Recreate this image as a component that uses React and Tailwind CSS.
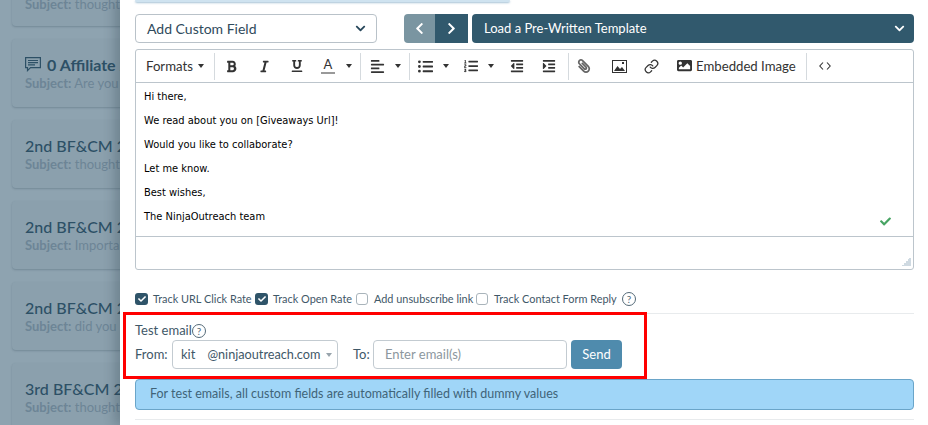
import React from "react";
import {
  FaAlignLeft,
  FaBold,
  FaCheck,
  FaChevronDown,
  FaChevronLeft,
  FaChevronRight,
  FaIndent,
  FaItalic,
  FaListOl,
  FaListUl,
  FaOutdent,
  FaPaperclip,
  FaImage,
  FaUnderline,
} from "react-icons/fa";
import { Link as LinkIcon } from "lucide-react";

const cards = [
  { title: "", subject: "thought you might", hidden: true },
  { title: "0 Affiliate 2020", subject: "Are you doing", icon: true },
  { title: "2nd BF&CM 2020", subject: "thought you might" },
  { title: "2nd BF&CM 2020", subject: "Important update" },
  { title: "2nd BF&CM 2020", subject: "did you catch" },
  { title: "3rd BF&CM 2020", subject: "thought you might" },
];

const body = [
  "Hi there,",
  "We read about you on [Giveaways Url]!",
  "Would you like to collaborate?",
  "Let me know.",
  "Best wishes,",
  "The NinjaOutreach team",
];

const Caret = ({ className = "" }) => (
  <span className={`block border-x-[3.5px] border-t-[4px] border-x-transparent border-t-[#333] ${className}`} />
);

const Sep = ({ className = "" }) => <div className={`h-[27px] w-px shrink-0 bg-[#d5dade] ${className}`} />;

const Tool = ({ icon: Icon, size = 14, className = "" }) => (
  <div className={`flex shrink-0 items-center justify-center ${className}`}>
    <Icon size={size} className="text-[#333]" />
  </div>
);

const CaretTool = ({ icon: Icon, size = 14, className = "" }) => (
  <div className={`flex shrink-0 items-center ${className}`}>
    <Icon size={size} className="text-[#333]" />
    <Caret className="ml-[10px]" />
  </div>
);

const PictureIcon = () => (
  <svg width="15" height="13" viewBox="0 0 15 13" className="text-[#333]">
    <rect x="0.5" y="0.5" width="14" height="12" fill="none" stroke="currentColor" />
    <path d="M2 11l3.5-5 2.5 3 2-2 3 4z" fill="currentColor" />
    <rect x="10" y="2" width="2" height="2" fill="currentColor" />
  </svg>
);

const CodeIcon = () => (
  <svg width="12" height="8" viewBox="0 0 12 8" fill="none" stroke="#333" strokeWidth="1.1">
    <path d="M4 0.5L0.8 4L4 7.5M8 0.5L11.2 4L8 7.5" />
  </svg>
);

const CommentIcon = () => (
  <svg width="16" height="15" viewBox="0 0 16 15" fill="none" stroke="currentColor" strokeWidth="1.2" className="-mt-[2px] shrink-0">
    <path d="M0.6 0.6h14.8v10H5.5L2.5 13.6v-3H0.6z" />
    <path d="M3 3.5h10M3 5.7h10M3 7.9h7" />
  </svg>
);

const Help = ({ className = "" }) => (
  <span className={`flex h-[14px] w-[14px] shrink-0 items-center justify-center rounded-full border border-[#546a78] text-[10px] leading-none text-[#546a78] ${className}`}>
    ?
  </span>
);

const Check = ({ checked, className = "" }) =>
  checked ? (
    <span className={`flex h-[12px] w-[13px] shrink-0 items-center justify-center rounded-[3px] bg-[#2f5469] ${className}`}>
      <FaCheck size={8} className="text-white" />
    </span>
  ) : (
    <span className={`block h-[12px] w-[12px] shrink-0 rounded-[3px] border border-[#a9b4bb] bg-white ${className}`} />
  );

const App = () => {
  return (
    <div className="relative flex h-[425px] w-[928px] overflow-hidden bg-white font-['Lato','Liberation_Sans',sans-serif]">
      {/* dimmed list behind the drawer */}
      <div className="flex h-full w-[120px] shrink-0 flex-col gap-[13px] overflow-hidden bg-[#8ea3b0] pl-[12px]">
        {cards.map((card, i) => (
          <div
            key={i}
            className={`h-[68px] w-[200px] shrink-0 rounded-[4px] bg-[#8ba0ad] pl-[13px] shadow-[0_1px_2px_rgba(40,60,75,0.25)] ${
              card.hidden ? "-mt-[42px] pt-[37px]" : "pt-[17px]"
            }`}
          >
            {!card.hidden && (
              <div className="flex items-center gap-[6px] whitespace-nowrap text-[16px] font-medium leading-[18px] text-[#2d5066]">
                {card.icon && <CommentIcon />}
                <span className={card.icon ? "font-bold" : ""}>{card.title}</span>
              </div>
            )}
            <div className="mt-[2px] whitespace-nowrap text-[13px] leading-[15px] text-[#6d8596]">
              <b>Subject:</b> {card.subject}
            </div>
          </div>
        ))}
      </div>

      {/* drawer */}
      <div className="relative flex w-[808px] shrink-0 flex-col bg-white pl-[15px] pr-[14px] shadow-[-6px_0_10px_rgba(30,50,65,0.25)]">
        <div className="h-[2px] w-[375px] rounded-b bg-[#cfe3f0] shadow-[0_1px_2px_rgba(70,130,170,0.5)]" />

        <div className="mt-[12px] flex h-[29px] items-stretch">
          <div className="flex w-[242px] items-center justify-between rounded-[4px] border border-[#b9c2c9] pl-[11px] pr-[10px] text-[14px] text-[#2f4a5c]">
            Add Custom Field
            <FaChevronDown size={11} className="text-[#27475b]" />
          </div>
          <div className="ml-[27px] flex w-[64px] overflow-hidden rounded-l-[4px]">
            <div className="flex w-[31px] items-center justify-center bg-[#7a95a1]">
              <FaChevronLeft size={13} className="text-white" />
            </div>
            <div className="flex flex-1 items-center justify-center bg-[#31596d]">
              <FaChevronRight size={13} className="text-white" />
            </div>
          </div>
          <div className="ml-[4px] flex flex-1 items-center justify-between rounded-[4px] bg-[#31596d] pl-[12px] pr-[9px] text-[13px] text-white">
            Load a Pre-Written Template
            <FaChevronDown size={11} />
          </div>
        </div>

        <div className="mt-[6px] h-[221px] rounded-[3px] border border-[#bcc5cc]">
          <div className="flex h-[33px] items-center border-b border-[#bcc5cc] pl-[10px]">
            <div className="mt-px flex w-[68px] shrink-0 items-center text-[13.2px] text-[#333]">
              Formats
              <Caret className="ml-[5px]" />
            </div>
            <Sep />
            <Tool icon={FaBold} size={13} className="w-[33px]" />
            <Tool icon={FaItalic} size={13} className="w-[33px]" />
            <Tool icon={FaUnderline} size={12} className="w-[32px]" />
            <div className="flex w-[47px] shrink-0 items-center pl-[7px]">
              <div className="flex w-[16px] flex-col items-center text-[13px] leading-[13px] text-[#333]">
                A
                <span className="mt-px h-[2px] w-[14px] bg-[#999]" />
              </div>
              <Caret className="ml-[10px]" />
            </div>
            <Sep />
            <CaretTool icon={FaAlignLeft} size={15} className="w-[48px] pl-[9px]" />
            <Sep />
            <CaretTool icon={FaListUl} size={15} className="w-[46px] pl-[8px]" />
            <CaretTool icon={FaListOl} size={14} className="w-[45px] pl-[8px]" />
            <Tool icon={FaOutdent} size={14} className="w-[32px]" />
            <Tool icon={FaIndent} size={14} className="w-[32px]" />
            <Sep className="ml-[3px]" />
            <div className="flex w-[30px] shrink-0 items-center justify-center">
              <FaPaperclip size={14} className="-scale-x-100 text-[#666]" />
            </div>
            <div className="flex w-[40px] shrink-0 items-center justify-center">
              <PictureIcon />
            </div>
            <div className="flex w-[24px] shrink-0 items-center justify-center">
              <LinkIcon size={15} className="text-[#333]" />
            </div>
            <div className="ml-[14px] flex w-[129px] shrink-0 items-center gap-[4px] text-[13.2px] text-[#333]">
              <FaImage size={15} />
              <span className="mt-px">Embedded Image</span>
            </div>
            <Sep />
            <div className="ml-[12px]">
              <CodeIcon />
            </div>
          </div>
          <div className="relative h-[154px] border-b border-[#bcc5cc] pl-[8px] pt-[8px] font-['DejaVu_Sans',sans-serif] text-[9.9px] leading-[12px] text-black">
            <div className="flex flex-col gap-[12px]">
              {body.map((line) => (
                <p key={line}>{line}</p>
              ))}
            </div>
            <FaCheck size={11} className="absolute bottom-[9px] right-[22px] text-[#47a463]" />
          </div>
          <div className="relative h-[31px]">
            <svg width="9" height="9" viewBox="0 0 9 9" className="absolute bottom-[2px] right-[2px]">
              <path d="M8 1v1M6 3h3M4 5h5M2 7h7M0 9h9" stroke="#9fb4c4" strokeWidth="1" />
            </svg>
          </div>
        </div>

        <div className="mt-[22px] flex h-[14px] items-center whitespace-nowrap text-[10.9px] text-[#3f5868]">
          <Check checked />
          <span className="ml-[5px] w-[102px]">Track URL Click Rate</span>
          <Check checked />
          <span className="ml-[5px] w-[83px]">Track Open Rate</span>
          <Check />
          <span className="ml-[6px] w-[102px]">Add unsubscribe link</span>
          <Check />
          <span className="ml-[6px] w-[128px]">Track Contact Form Reply</span>
          <Help />
        </div>
        <div className="mt-[7px] h-px bg-[#e8ebed]" />

        <div className="mt-[10px] flex h-[14px] items-center text-[13px] text-[#3f5868]">
          <span className="w-[57px] whitespace-nowrap">Test email</span>
          <Help />
        </div>
        <div className="mt-[2px] flex h-[29px] items-stretch text-[13px] text-[#3f5868]">
          <span className="w-[37px] self-center">From:</span>
          <div className="flex w-[166px] items-center justify-between rounded-[4px] border border-[#c3cbd1] pl-[8px] pr-[5px]">
            <span className="whitespace-nowrap">
              kit<span className="ml-[12px] text-[12.7px]">@ninjaoutreach.com</span>
            </span>
            <span className="block border-x-[3.5px] border-t-[4px] border-x-transparent border-t-[#98a4ac]" />
          </div>
          <span className="ml-[15px] w-[20px] self-center">To:</span>
          <div className="flex w-[194px] items-center rounded-[4px] border border-[#c3cbd1] pl-[11px] text-[#8c979e]">
            Enter email(s)
          </div>
          <div className="ml-[4px] flex w-[51px] items-center justify-center rounded-[4px] bg-[#4f8bad] text-white">
            Send
          </div>
        </div>

        <div className="mt-[10px] flex h-[31px] items-center rounded-[4px] border border-[#6aa5c9] bg-[#a0d6f8] pl-[14px] text-[12.5px] text-[#3f6478]">
          For test emails, all custom fields are automatically filled with dummy values
        </div>
        <div className="mt-[9px] h-px bg-[#e8ebed]" />

        {/* annotation box */}
        <div className="absolute left-[3px] top-[312px] h-[67px] w-[524px] border-[3px] border-[#ff0000]" />
      </div>
    </div>
  );
};

export default App;
